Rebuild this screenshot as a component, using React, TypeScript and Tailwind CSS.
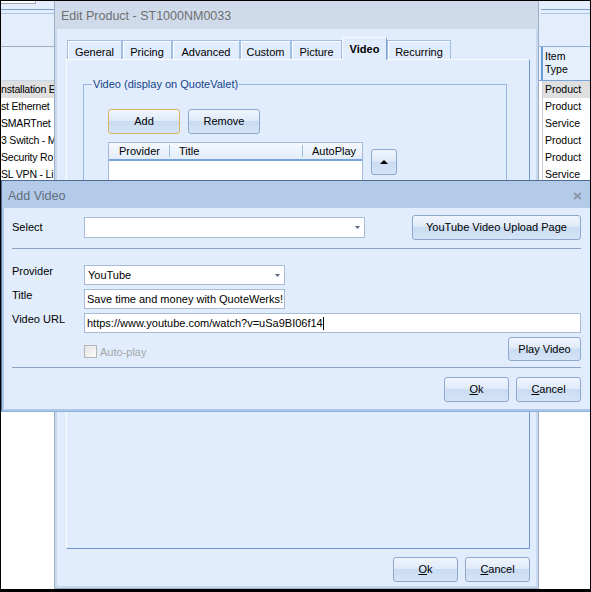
const font = "font-['Liberation_Sans',Arial,sans-serif]";

const btnBg =
  "bg-[linear-gradient(to_bottom,#f0f5fd_0%,#e0eaf8_46%,#cadcf3_50%,#d5e4f7_100%)]";

function Btn({
  className = "",
  focus = false,
  children,
}: {
  className?: string;
  focus?: boolean;
  children?: React.ReactNode;
}) {
  return (
    <div
      className={`flex shrink-0 items-center justify-center rounded-[3px] border ${
        focus ? "border-[#d8b564]" : "border-[#8ea8cb]"
      } ${btnBg} text-[11px] leading-none text-black ${className}`}
    >
      {children}
    </div>
  );
}

function Arrow() {
  return (
    <svg width="5" height="3" viewBox="0 0 5 3" className="shrink-0">
      <path d="M0 0h5L2.5 3z" fill="#56677f" />
    </svg>
  );
}

function Combo({ className = "", value = "" }: { className?: string; value?: string }) {
  return (
    <div
      className={`flex shrink-0 items-center border border-[#a7bbd7] bg-white pl-[3px] pr-[4px] text-[11px] text-black ${className}`}
    >
      <span className="flex-1">{value}</span>
      <Arrow />
    </div>
  );
}

const leftRows = [
  "nstallation E",
  "st Ethernet",
  "SMARTnet",
  "3 Switch - M",
  "Security Ro",
  "SL VPN - Li",
];
const rightRows = ["Product", "Product", "Service", "Product", "Product", "Service"];

function Background() {
  return (
    <div className="absolute inset-0 flex justify-between">
      {/* left part of the grid behind */}
      <div className="flex w-[53px] flex-col overflow-hidden bg-white">
        <div className="h-[45px] bg-[#e3edfb]">
          <div className="h-[3px] w-[35px] border-b border-r border-[#a2aab6] bg-white" />
          <div className="mt-[5px] h-px bg-[#7d9fcf]" />
          <div className="mt-[3px] h-px bg-[#a9c3e6]" />
        </div>
        <div className="h-px bg-[#a3acb9]" />
        <div className="h-[33px] bg-[#e6effc]" />
        <div className="h-px bg-[#c9d6e8]" />
        {leftRows.map((r, i) => (
          <div
            key={r}
            className={`h-[17px] whitespace-nowrap text-[10.5px] leading-[17px] tracking-[-0.2px] text-black ${
              i === 0 ? "bg-[#dfdfdf]" : "bg-white"
            }`}
          >
            {r}
          </div>
        ))}
      </div>

      {/* right part of the grid behind */}
      <div className="flex w-[51px] flex-col bg-white">
        <div className="h-[45px] bg-[#e3edfb] pl-[2px]">
          <div className="mt-[8px] h-px bg-[#7d9fcf]" />
          <div className="mt-[3px] h-px bg-[#a9c3e6]" />
        </div>
        <div className="h-px bg-[#8eafdb]" />
        <div className="h-[33px] bg-[#e6effc] pl-[2px]">
          <div className="h-full border-l-2 border-[#6f9cd6] pl-[2px] pt-[3px] text-[10.5px] leading-[13px] text-black">
            Item
            <br />
            Type
          </div>
        </div>
        <div className="h-px bg-[#7aa4dc]" />
        {rightRows.map((r, i) => (
          <div key={i} className="h-[17px] pl-[3px]">
            <div
              className={`h-full border-l border-[#c9d0db] pl-[2px] text-[10.5px] leading-[17px] text-black ${
                i === 0 ? "bg-[#dfdfdf]" : "bg-white"
              }`}
            >
              {r}
            </div>
          </div>
        ))}
      </div>
    </div>
  );
}

const tabs = [
  { label: "General", w: "w-[55px]" },
  { label: "Pricing", w: "w-[50px]" },
  { label: "Advanced", w: "w-[68px]" },
  { label: "Custom", w: "w-[51px]" },
  { label: "Picture", w: "w-[51px]" },
  { label: "Video", w: "w-[45px]", active: true },
  { label: "Recurring", w: "w-[64px]" },
];

function EditProduct() {
  return (
    <div className="absolute left-[53px] top-0 flex h-[588px] w-[485px] flex-col border-x border-b border-[#9eafc5] bg-[#c8d9ef]">
      <div className="flex h-[28px] shrink-0 items-center bg-[#cfdbeb] pl-[6px] pt-[3px] text-[12.5px] text-[#6f6f6f]">
        Edit Product - ST1000NM0033
      </div>
      <div className="mx-[2px] mb-[2px] flex flex-1 flex-col bg-[#e1edfc] pl-[9px] pt-[8px]">
        {/* tabs */}
        <div className="relative z-10 flex h-[22px] items-end pl-px">
          {tabs.map((t) =>
            t.active ? (
              <div
                key={t.label}
                className={`-mb-px flex h-[23px] shrink-0 justify-center border-l border-r border-t border-l-[#f7fafd] border-r-[#7ba2d9] border-t-[#f7fafd] bg-[#e1edfc] pt-[3px] text-[11px] font-bold text-black ${t.w}`}
              >
                {t.label}
              </div>
            ) : (
              <div
                key={t.label}
                className={`flex h-[19px] shrink-0 justify-center border-x border-t border-[#a0bde4] bg-[#e1edfc] pt-[3px] text-[11px] text-black shadow-[inset_1px_1px_0_#ffffff] ${t.w}`}
              >
                {t.label}
              </div>
            )
          )}
        </div>

        {/* tab page */}
        <div className="h-[490px] w-[464px] shrink-0 border border-b-[#6b97d5] border-l-[#fbfbf7] border-r-[#6b97d5] border-t-[#fbfbf7]">
          <div className="relative ml-[16px] mt-[24px] h-[310px] w-[424px] border border-[#98b8e2] pl-[24px] pt-[24px]">
            <div className="absolute left-[8px] top-[-8px] bg-[#e1edfc] px-px text-[11px] leading-[14px] text-[#15428b]">
              Video (display on QuoteValet)
            </div>
            <div className="flex gap-[8px]">
              <Btn focus className="h-[25px] w-[72px]">
                Add
              </Btn>
              <Btn className="h-[25px] w-[72px]">Remove</Btn>
            </div>
            <div className="mt-[8px] flex items-start">
              <div className="h-[200px] w-[255px] border border-[#a3bbd9] bg-white">
                <div className="flex h-[18px] items-center border-b-2 border-[#7aa4dc] bg-linear-to-b from-[#f6f9fe] to-[#e2ecf9] text-[11px] text-black">
                  <div className="w-[60px] pl-[10px]">Provider</div>
                  <div className="h-[12px] w-px bg-[#9bbbe5]" />
                  <div className="w-[132px] pl-[9px]">Title</div>
                  <div className="h-[12px] w-px bg-[#9bbbe5]" />
                  <div className="pl-[9px]">AutoPlay</div>
                </div>
              </div>
              <Btn className="ml-[8px] mt-[7px] h-[26px] w-[26px]">
                <svg width="8" height="4" viewBox="0 0 8 4">
                  <path d="M0 4h8L4 0z" fill="#000" />
                </svg>
              </Btn>
            </div>
          </div>
        </div>

        <div className="mt-[8px] flex w-[464px] justify-end gap-[7px]">
          <Btn className="h-[25px] w-[65px]">
            <u>O</u>k
          </Btn>
          <Btn className="h-[25px] w-[65px]">
            <u>C</u>ancel
          </Btn>
        </div>
      </div>
    </div>
  );
}

function AddVideo() {
  return (
    <div className="absolute left-0 top-[179px] flex h-[232px] w-[589px] flex-col border-b border-l border-t border-b-[#8db0dc] border-l-[#4c6b95] border-t-[#4c6b95] bg-[#afc7e7]">
      <div className="flex h-[27px] shrink-0 items-center bg-[#b3cbe9] pl-[6px] text-[12.5px] text-[#626d7b]">
        <span className="mt-[3px]">Add Video</span>
        <svg width="9" height="8" viewBox="0 0 9 8" className="ml-auto mr-[8px] mt-[2px]">
          <path d="M1 1l7 6M8 1L1 7" stroke="#8c99aa" strokeWidth="2" />
        </svg>
      </div>
      <div className="mb-[2px] ml-[2px] flex flex-1 flex-col bg-[#e1edfc] pl-[8px] pt-[7px] text-[11px] text-black">
        <div className="flex w-[569px] flex-col">
          <div className="flex h-[25px] items-center">
            <div className="w-[72px]">Select</div>
            <Combo className="h-[21px] w-[281px]" />
            <Btn className="ml-auto h-[25px] w-[169px]">YouTube Video Upload Page</Btn>
          </div>

          <div className="mt-[8px] h-px bg-[#8ba2c2]" />

          <div className="mt-[16px] flex h-[20px]">
            <div className="w-[72px] leading-[12px]">Provider</div>
            <Combo className="h-[20px] w-[201px]" value="YouTube" />
          </div>
          <div className="mt-[4px] flex h-[20px]">
            <div className="w-[72px] leading-[12px]">Title</div>
            <div className="flex h-[20px] w-[201px] items-center border border-[#a7bbd7] bg-white pl-[2px]">
              Save time and money with QuoteWerks!
            </div>
          </div>
          <div className="mt-[4px] flex h-[20px]">
            <div className="w-[72px] leading-[12px]">Video URL</div>
            <div className="flex h-[20px] w-[497px] items-center border border-[#a7bbd7] bg-white pl-[2px]">
              https://www.youtube.com/watch?v=uSa9BI06f14
              <span className="h-[13px] w-px bg-black" />
            </div>
          </div>
          <div className="mt-[4px] flex h-[24px]">
            <div className="mb-px ml-[72px] flex items-center gap-[3px] self-end text-[#a3a6aa]">
              <div className="h-[13px] w-[13px] border border-[#b5b5b5] bg-[linear-gradient(135deg,#e4e4e4,#fbfbfb)]" />
              <span>Auto-play</span>
            </div>
            <Btn className="ml-auto h-[24px] w-[73px]">Play Video</Btn>
          </div>

          <div className="mt-[6px] h-px bg-[#8ba2c2]" />

          <div className="mt-[9px] flex justify-end gap-[7px]">
            <Btn className="h-[25px] w-[65px]">
              <u>O</u>k
            </Btn>
            <Btn className="h-[25px] w-[65px]">
              <u>C</u>ancel
            </Btn>
          </div>
        </div>
      </div>
    </div>
  );
}

export default function App() {
  return (
    <div
      className={`relative h-[592px] w-[591px] overflow-hidden border border-b-[3px] border-black bg-white ${font}`}
    >
      <Background />
      <EditProduct />
      <AddVideo />
    </div>
  );
}
